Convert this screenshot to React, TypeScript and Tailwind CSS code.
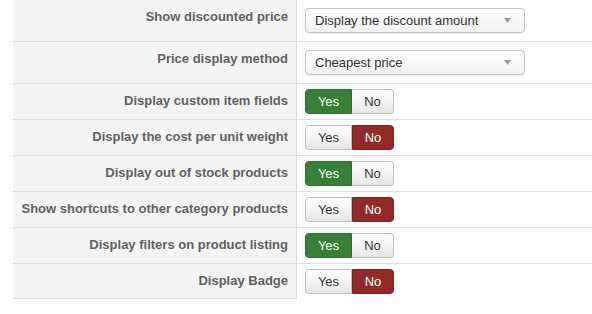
const rows: { label: string; kind: "select" | "toggle"; value: string }[] = [
  { label: "Show discounted price", kind: "select", value: "Display the discount amount" },
  { label: "Price display method", kind: "select", value: "Cheapest price" },
  { label: "Display custom item fields", kind: "toggle", value: "yes" },
  { label: "Display the cost per unit weight", kind: "toggle", value: "no" },
  { label: "Display out of stock products", kind: "toggle", value: "yes" },
  { label: "Show shortcuts to other category products", kind: "toggle", value: "no" },
  { label: "Display filters on product listing", kind: "toggle", value: "yes" },
  { label: "Display Badge", kind: "toggle", value: "no" },
];

function SelectBox({ value }: { value: string }) {
  return (
    <div className="flex h-[25px] w-[220px] items-center justify-between rounded-[4px] border border-[#c4c4c4] bg-gradient-to-b from-white to-[#f1f1f1] pl-[9px] pr-[13px] text-[13px] text-[#333] shadow-[0_1px_1px_rgba(0,0,0,0.08)]">
      <span>{value}</span>
      <svg width="7" height="5" viewBox="0 0 7 5">
        <path d="M0 0h7L3.5 5z" fill="#999" />
      </svg>
    </div>
  );
}

function YesNo({ value }: { value: string }) {
  const yes = value === "yes";
  return (
    <div className="flex h-[25px] text-[13px]">
      <div
        className={
          yes
            ? "flex w-[47px] items-center justify-center rounded-l-[4px] border border-[#2f6f2f] bg-[#378137] text-white"
            : "flex w-[47px] items-center justify-center rounded-l-[4px] border border-[#bdbdbd] bg-gradient-to-b from-white to-[#e6e6e6] text-[#333]"
        }
      >
        Yes
      </div>
      <div
        className={
          yes
            ? "flex w-[42px] items-center justify-center rounded-r-[4px] border border-l-0 border-[#bdbdbd] bg-gradient-to-b from-white to-[#e6e6e6] text-[#333]"
            : "flex w-[42px] items-center justify-center rounded-r-[4px] border border-[#7d221e] bg-[#942a25] text-white"
        }
      >
        No
      </div>
    </div>
  );
}

export default function App() {
  return (
    <div className="h-[314px] w-[592px] bg-white pl-[13px] font-['Liberation_Sans',Arial,sans-serif]">
      {rows.map((row, i) => {
        const last = i === rows.length - 1;
        return (
          <div key={row.label} className="flex">
            <div className="w-[284px] border-b border-r border-[#dddddd] bg-[#f4f4f4] pr-[8px] pt-[8px] text-right text-[13px] font-bold leading-[18px] text-[#616161]">
              {row.label}
            </div>
            <div
              className={
                (last ? "" : "border-b border-[#dddddd] ") +
                (row.kind === "select" ? "flex-1 py-[8px] pl-[8px]" : "flex-1 py-[5px] pl-[8px]")
              }
            >
              {row.kind === "select" ? <SelectBox value={row.value} /> : <YesNo value={row.value} />}
            </div>
          </div>
        );
      })}
    </div>
  );
}
